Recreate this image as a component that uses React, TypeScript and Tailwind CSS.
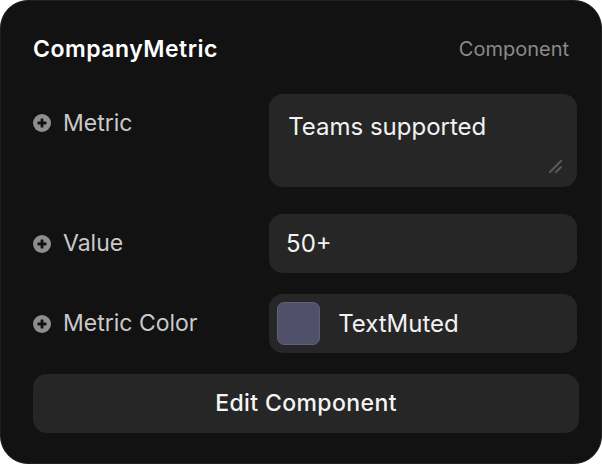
import React from "react";

function PlusIcon() {
  return (
    <svg width="18" height="18" viewBox="0 0 18 18" className="shrink-0">
      <circle cx="9" cy="9" r="9" fill="#8e8e8e" />
      <rect x="4.5" y="7.6" width="9" height="2.8" rx="0.6" fill="#121212" />
      <rect x="7.6" y="4.5" width="2.8" height="9" rx="0.6" fill="#121212" />
    </svg>
  );
}

function Label({ text }: { text: string }) {
  return (
    <div className="flex items-center gap-3 text-[23px] text-[#c9c9c9]">
      <PlusIcon />
      <span>{text}</span>
    </div>
  );
}

export default function App() {
  return (
    <div className="w-[602px] h-[464px] bg-white" style={{ fontFamily: "Inter, 'Noto Sans', sans-serif" }}>
      <div className="w-full h-full bg-[#121212] rounded-[28px] border border-[#1f1f1f] pl-8 pr-6 pt-[33px]">
        {/* header */}
        <div className="flex items-center justify-between pr-2 h-[30px]">
          <h2 className="text-[23px] font-semibold tracking-[0.5px] text-white">CompanyMetric</h2>
          <span className="text-[20px] text-[#8a8a8a]">Component</span>
        </div>

        {/* Metric */}
        <div className="flex mt-[30px]">
          <div className="w-[237px] pt-[12px]">
            <Label text="Metric" />
          </div>
          <div className="relative w-[309px] h-[93px] bg-[#262626] rounded-[14px]">
            <textarea
              defaultValue="Teams supported"
              className="w-full h-full resize-none bg-transparent outline-none text-[24px] leading-[32px] text-[#f2f2f2] pl-[19px] pt-[17px]"
            />
            <svg width="14" height="14" viewBox="0 0 14 14" className="absolute right-[14px] bottom-[14px]">
              <line x1="1" y1="13" x2="12" y2="2" stroke="#5a5a5a" strokeWidth="2" strokeLinecap="round" />
              <line x1="7" y1="13" x2="12" y2="8" stroke="#5a5a5a" strokeWidth="2" strokeLinecap="round" />
            </svg>
          </div>
        </div>

        {/* Value */}
        <div className="flex items-center mt-[27px]">
          <div className="w-[237px]">
            <Label text="Value" />
          </div>
          <div className="w-[309px] h-[59px] bg-[#262626] rounded-[14px] flex items-center pl-[17px] text-[24px] text-[#f2f2f2]">
            50+
          </div>
        </div>

        {/* Metric Color */}
        <div className="flex items-center mt-[21px]">
          <div className="w-[237px]">
            <Label text="Metric Color" />
          </div>
          <div className="w-[309px] h-[59px] bg-[#262626] rounded-[14px] flex items-center pl-2 gap-[18px] text-[24px] text-[#f2f2f2]">
            <div className="w-[43px] h-[43px] rounded-[7px] bg-[#50506b] border border-[#5f5f7a]" />
            <span>TextMuted</span>
          </div>
        </div>

        {/* Button */}
        <button className="mt-[21px] w-[546px] h-[59px] bg-[#262626] rounded-[14px] text-[23px] font-medium tracking-[0.4px] text-[#f5f5f5]">
          Edit Component
        </button>
      </div>
    </div>
  );
}
